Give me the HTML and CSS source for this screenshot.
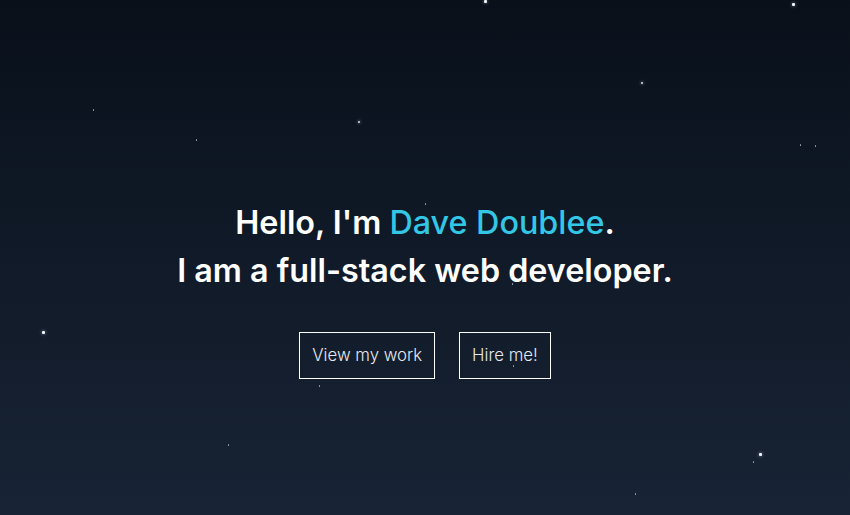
FILE: index.html
```html
<!DOCTYPE html>
<html>
<head>
<meta charset="utf-8">
<link rel="stylesheet" href="styles.css">
</head>
<body>
<section class="hero">
  <div class="stars">
    <span class="star big" style="left:484px;top:0px"></span>
    <span class="star big" style="left:792px;top:3px"></span>
    <span class="star" style="left:641px;top:82px"></span>
    <span class="star small" style="left:93px;top:109px"></span>
    <span class="star" style="left:358px;top:121px"></span>
    <span class="star small" style="left:196px;top:139px"></span>
    <span class="star small" style="left:800px;top:144px"></span>
    <span class="star small" style="left:815px;top:145px"></span>
    <span class="star small" style="left:425px;top:203px"></span>
    <span class="star big" style="left:42px;top:331px"></span>
    <span class="star small" style="left:513px;top:365px"></span>
    <span class="star small" style="left:319px;top:385px"></span>
    <span class="star small" style="left:228px;top:444px"></span>
    <span class="star big" style="left:759px;top:453px"></span>
    <span class="star small" style="left:753px;top:461px"></span>
    <span class="star small" style="left:635px;top:493px"></span>
    <span class="star small" style="left:512px;top:283px"></span>
  </div>
  <div class="content">
    <h1 class="headline">Hello, I'm <span class="accent">Dave Doublee</span>.<br>I am a full-stack web developer.</h1>
    <div class="actions">
      <a class="btn">View my work</a>
      <a class="btn">Hire me!</a>
    </div>
  </div>
</section>
</body>
</html>
```
FILE: styles.css
```css
html, body {
  margin: 0;
  padding: 0;
  height: 100%;
}
body {
  font-family: "Inter", "Open Sans", sans-serif;
  overflow: hidden;
}
.hero {
  position: relative;
  width: 850px;
  height: 515px;
  background: linear-gradient(180deg, #09101a 0%, #101a28 50%, #182335 100%);
  display: flex;
  align-items: center;
  justify-content: center;
}
.stars {
  position: absolute;
  inset: 0;
}
.star {
  position: absolute;
  width: 2px;
  height: 2px;
  background: #d8e0ea;
  border-radius: 1px;
  box-shadow: 0 0 3px 1px rgba(200, 215, 235, 0.25);
}
.star.big {
  width: 3px;
  height: 3px;
  background: #f0f4fa;
}
.star.small {
  width: 1px;
  height: 2px;
  background: #9aa6b6;
  box-shadow: none;
}
.content {
  position: relative;
  display: flex;
  flex-direction: column;
  align-items: center;
  margin-top: 62px;
}
.headline {
  margin: 0;
  color: #ffffff;
  font-size: 32.3px;
  font-weight: 600;
  line-height: 48px;
  text-align: center;
}
.accent {
  color: #33c7e6;
  font-weight: 500;
}
.actions {
  display: flex;
  gap: 24px;
  margin-top: 37px;
}
.btn {
  display: flex;
  align-items: center;
  justify-content: center;
  height: 45px;
  padding: 0 12px;
  border: 1px solid #ffffff;
  color: #e6e9ee;
  font-size: 16.8px;
  font-weight: 300;
  text-decoration: none;
}
```
